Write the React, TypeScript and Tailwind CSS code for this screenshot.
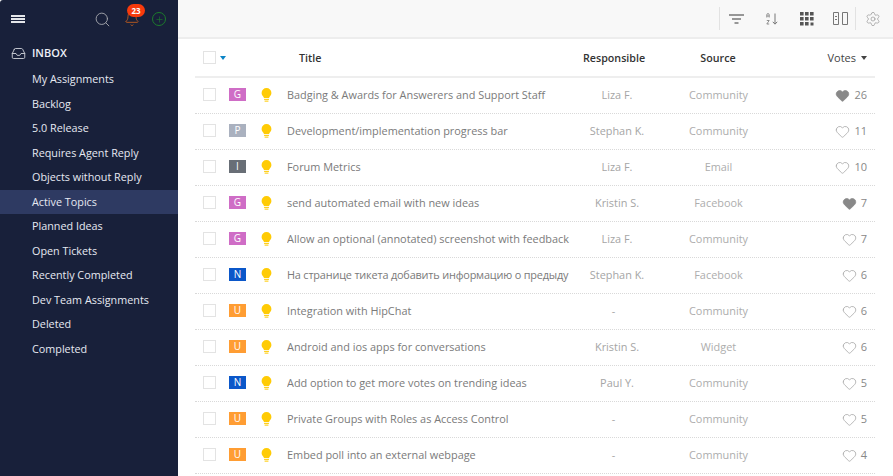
import { Inbox, Search, Bell, Plus, Heart, Settings } from "lucide-react";

const menu = [
  "My Assignments",
  "Backlog",
  "5.0 Release",
  "Requires Agent Reply",
  "Objects without Reply",
  "Active Topics",
  "Planned Ideas",
  "Open Tickets",
  "Recently Completed",
  "Dev Team Assignments",
  "Deleted",
  "Completed",
];

const badgeColors: Record<string, string> = {
  G: "bg-[#cf6dc6]",
  P: "bg-[#aab1bf]",
  I: "bg-[#686e76]",
  N: "bg-[#0b57c9]",
  U: "bg-[#ff9d33]",
};

const rows = [
  { b: "G", title: "Badging & Awards for Answerers and Support Staff", who: "Liza F.", src: "Community", votes: 26, liked: true },
  { b: "P", title: "Development/implementation progress bar", who: "Stephan K.", src: "Community", votes: 11 },
  { b: "I", title: "Forum Metrics", who: "Liza F.", src: "Email", votes: 10 },
  { b: "G", title: "send automated email with new ideas", who: "Kristin S.", src: "Facebook", votes: 7, liked: true },
  { b: "G", title: "Allow an optional (annotated) screenshot with feedback", who: "Liza F.", src: "Community", votes: 7 },
  { b: "N", title: "На странице тикета добавить информацию о предыду", who: "Stephan K.", src: "Facebook", votes: 6, tight: true },
  { b: "U", title: "Integration with HipChat", who: "-", src: "Community", votes: 6 },
  { b: "U", title: "Android and ios apps for conversations", who: "Kristin S.", src: "Widget", votes: 6 },
  { b: "N", title: "Add option to get more votes on trending ideas", who: "Paul Y.", src: "Community", votes: 5 },
  { b: "U", title: "Private Groups with Roles as Access Control", who: "-", src: "Community", votes: 5 },
  { b: "U", title: "Embed poll into an external webpage", who: "-", src: "Community", votes: 4 },
];

function Bulb() {
  return (
    <svg width="11" height="14" viewBox="0 0 12 16">
      <path d="M6 0a5.6 5.6 0 0 0-5.6 5.600c0 2.200 1.200 3.300 2 4.400.4.500.6 1 .7 1.400h5.800c.1-.4.300-.9.700-1.400.8-1.100 2-2.200 2-4.400A5.600 5.600 0 0 0 6 0z" fill="#ffcb05" />
      <rect x="3.200" y="12.400" width="5.600" height="1.200" fill="#ffcb05" />
      <rect x="3.800" y="14.400" width="4.400" height="1.200" fill="#ffcb05" />
    </svg>
  );
}

function Sidebar() {
  return (
    <aside className="w-[178px] shrink-0 bg-[#18203a] rounded-tl-[3px] flex flex-col">
      <div className="h-[38px] flex items-center pl-[11px] pr-[12px]">
        <div className="flex flex-col gap-[1px] w-[14px]">
          <span className="h-[2px] bg-[#e4e6ea]" />
          <span className="h-[2px] bg-[#e4e6ea]" />
          <span className="h-[2px] bg-[#e4e6ea]" />
        </div>
        <Search className="ml-auto text-[#a5a7ad]" size={17} strokeWidth={1.300} />
        <div className="relative ml-[13px]">
          <Bell className="text-[#b9591f]" size={16} strokeWidth={1.400} />
          <span className="absolute left-[3px] top-[-7px] w-[18px] h-[13px] rounded-full bg-[#f83a0c] text-white text-[8px] font-bold leading-[13px] text-center">
            23
          </span>
        </div>
        <div className="ml-[12px] w-[14px] h-[14px] rounded-full border border-[#1c7c2c] flex items-center justify-center">
          <Plus className="text-[#1c7c2c]" size={9} strokeWidth={1.600} />
        </div>
      </div>
      <div className="h-[30px] flex items-center pl-[11px] gap-[6px] text-[#eef0f8]">
        <Inbox className="text-[#c9ccd4]" size={15} strokeWidth={1.500} />
        <span className="text-[11px] font-semibold">INBOX</span>
      </div>
      <ul className="mt-[-1px]">
        {menu.map((item) => (
          <li
            key={item}
            className={`h-[24.500px] pl-[32px] flex items-center text-[10.800px] text-[#e6e9f2] ${
              item === "Active Topics" ? "bg-[#2e3a62]" : ""
            }`}
          >
            {item}
          </li>
        ))}
      </ul>
    </aside>
  );
}

function Toolbar() {
  return (
    <div className="h-[39px] shrink-0 bg-[#f8f8f8] border-b-2 border-[#ededed] flex items-center justify-end">
      <div className="h-[23px] border-l border-[#e2e2e2] flex items-center pl-[9px] pr-[7px]">
        <svg width="15" height="12" viewBox="0 0 15 12" stroke="#777" strokeWidth="1.300">
          <path d="M0 2h15M3 6h9M5.500 10h4" />
        </svg>
        <svg width="12" height="12" viewBox="0 0 12 12" fill="none" stroke="#777" className="ml-[22px]">
          <path d="M9 .5v10.500M6.800 8.800 9 11.200l2.200-2.400" />
          <path d="M.8 4.500V1.800a1.200 1.200 0 0 1 2.400 0v2.700M.8 3h2.400M.8 7.500h2.400L.8 11h2.400" strokeWidth="0.800" />
        </svg>
        <svg width="14" height="14" viewBox="0 0 14 14" fill="#555" className="ml-[22px]">
          <path d="M0 0h3.600v3.600H0zM5 0h3.600v3.600H5zM10 0h3.600v3.600H10zM0 5h3.600v3.600H0zM5 5h3.600v3.600H5zM10 5h3.600v3.600H10zM0 10h3.600v3.600H0zM5 10h3.600v3.600H5zM10.500 10.500h3v3h-3z" />
        </svg>
        <svg width="15" height="13" viewBox="0 0 15 13" fill="none" stroke="#777" className="ml-[19px]">
          <path d="M.5.500h5v12h-5zM9.500.5h5v12h-5zM2 4.500h2M2 7.500h2" />
        </svg>
      </div>
      <div className="h-[23px] border-l border-[#e2e2e2] flex items-center pl-[9px] pr-[12px]">
        <Settings className="text-[#999]" size={16} strokeWidth={1.100} />
      </div>
    </div>
  );
}

function Table() {
  return (
    <div className="flex-1 pl-[17px] pr-[18px] overflow-hidden">
      <div className="h-[39px] flex items-center border-b-2 border-[#eeeeee] pl-[8px] text-[10.700px] font-semibold text-[#333] whitespace-nowrap">
        <span className="w-[13px] h-[13px] border border-[#e3e3e3] bg-white" />
        <span className="ml-[4px] w-0 h-0 border-x-[3.500px] border-x-transparent border-t-[4px] border-t-[#0a84c6]" />
        <span className="ml-[73px] mt-[1px] w-[283px]">Title</span>
        <span className="ml-[1px] mt-[1px] w-[62px] text-center">Responsible</span>
        <span className="ml-[55px] mt-[1px] w-[36px] text-center">Source</span>
        <span className="ml-auto mr-[8px] mt-[1px] flex items-center gap-[5px] text-[11px] font-normal text-[#444]">
          Votes
          <span className="w-0 h-0 border-x-[3.500px] border-x-transparent border-t-[4px] border-t-[#444]" />
        </span>
      </div>
      {rows.map((r, i) => (
        <div
          key={i}
          className="h-[36px] flex items-center border-b border-dotted border-[#d9d9d9] pl-[8px] text-[10.900px] text-[#7a7a7a]"
        >
          <span className="shrink-0 w-[13px] h-[13px] mb-[2px] border border-[#e3e3e3] bg-white" />
          <span
            className={`shrink-0 ml-[13px] w-[17px] h-[13px] mb-[2px] text-[10px] leading-[13px] text-center text-white font-medium ${badgeColors[r.b]}`}
          >
            {r.b}
          </span>
          <span className="shrink-0 ml-[15px] w-[11px] mb-[1px] flex">
            <Bulb />
          </span>
          <span
            className={`shrink-0 ml-[15px] w-[286px] whitespace-nowrap overflow-hidden ${r.tight ? "tracking-[-0.18px]" : ""}`}
          >
            {r.title}
          </span>
          <span className={`shrink-0 w-[88px] text-center text-[#a5a5a5] ${r.who === "-" ? "pr-[7px]" : ""}`}>
            {r.who}
          </span>
          <span className="shrink-0 ml-[21px] w-[73px] text-center text-[#adadad]">{r.src}</span>
          <span className="ml-auto mr-[8px] flex items-center gap-[4px]">
            <Heart
              size={15}
              strokeWidth={1.100}
              className={r.liked ? "text-[#888] mb-[1px]" : "text-[#999] mb-[1px]"}
              fill={r.liked ? "#888" : "none"}
            />
            <span className="text-[#888] text-[11px]">{r.votes}</span>
          </span>
        </div>
      ))}
    </div>
  );
}

export default function App() {
  return (
    <div className="h-[476px] w-[893px] flex overflow-hidden bg-white font-['Open_Sans',sans-serif]">
      <Sidebar />
      <main className="flex-1 flex flex-col min-w-0">
        <Toolbar />
        <Table />
      </main>
    </div>
  );
}
